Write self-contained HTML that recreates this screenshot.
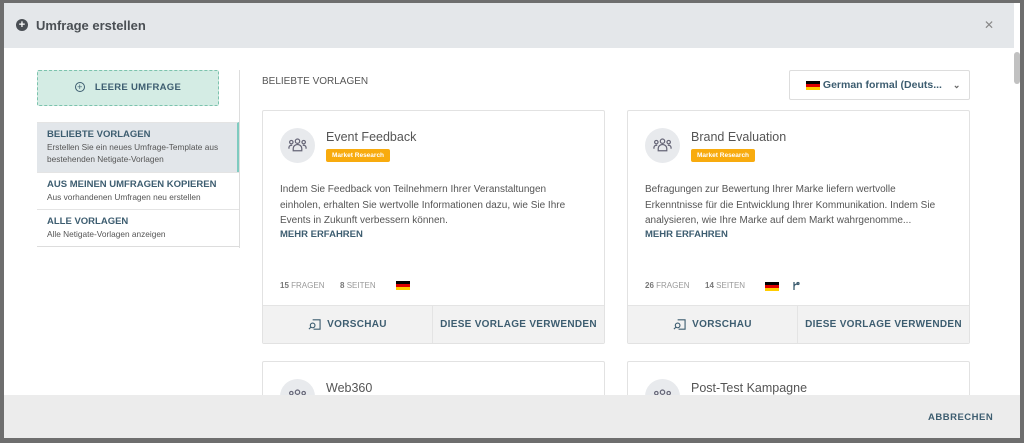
<!DOCTYPE html>
<html><head><meta charset="utf-8"><style>
*{box-sizing:border-box;margin:0;padding:0}
body{width:1024px;height:443px;overflow:hidden;background:#6e6e6e;font-family:"Liberation Sans",sans-serif;position:relative}
.modal{position:absolute;left:4px;top:3px;width:1016px;height:435px;background:#fff;overflow:hidden}
.hdr{position:absolute;left:0;top:0;width:1010px;height:45px;background:#e4e7ea}
.hdr .t{position:absolute;left:32px;top:15px;font-size:13px;font-weight:bold;color:#4a4f54}
.hdr .pl{position:absolute;left:12px;top:16px;width:12px;height:12px;border-radius:50%;background:#4a4f54;color:#fff;font-size:11px;line-height:12px;text-align:center;font-weight:bold}
.hdr .x{position:absolute;left:980px;top:15px;font-size:12px;color:#888}
.sb{position:absolute;left:1010px;top:45px;width:6px;height:390px;background:#fff}
.sb div{position:absolute;left:0;top:4px;width:6px;height:32px;background:#c1c1c1;border-radius:3px}
.btn{position:absolute;left:33px;top:67px;width:182px;height:36px;background:#d4ece4;border:1px dashed #7cc3ad;border-radius:2px;font-size:9.5px;font-weight:bold;color:#3d5d70;letter-spacing:.3px;text-align:center;line-height:34px}
.btn span{display:inline-block;width:10px;height:10px;border:1px solid #3d5d70;border-radius:50%;font-size:9px;line-height:8px;font-weight:normal;margin-right:10px}
.vline{position:absolute;left:235px;top:67px;width:1px;height:178px;background:#ddd}
.menu{position:absolute;left:33px;top:119px;width:202px;border-bottom:1px solid #ddd}
.mi{padding:6px 10px;border-top:1px solid #e4e4e4;font-size:8.3px;color:#555;line-height:12px}
.mi b{display:block;font-size:9.5px;color:#3d5d70;line-height:12px}
.mi.a{background:#e2e6ea;border-right:2px solid #7fcbc0;height:50px;padding-top:6px}
.sec{position:absolute;left:258px;top:73px;font-size:10px;color:#555}
.lang{position:absolute;left:785px;top:67px;width:181px;height:30px;border:1px solid #ddd;border-radius:2px;font-size:10.5px;font-weight:bold;color:#3d5d70;line-height:28px;padding-left:16px}
.flag{display:inline-block;width:14px;height:9px;background:linear-gradient(#000 0 33%,#d00 33% 66%,#fc0 66%);vertical-align:middle}
.card{position:absolute;width:343px;border:1px solid #e2e2e2;border-radius:2px;background:#fff}
.ic{position:absolute;left:17px;top:17px;width:35px;height:35px;border-radius:50%;background:#e8eaed}
.ic svg{position:absolute;left:8px;top:9px}
.ct{position:absolute;left:63px;top:19px;font-size:12.5px;color:#555}
.tag{position:absolute;left:63px;top:38px;background:#f8ab0e;color:#fff;font-size:6.5px;font-weight:bold;padding:3px 6px;border-radius:2px}
.desc{position:absolute;left:17px;top:71px;width:292px;font-size:10px;color:#555;line-height:15.5px}
.more{position:absolute;left:17px;top:118px;font-size:9.5px;font-weight:bold;color:#3d5d70}
.meta{position:absolute;left:17px;top:170px;font-size:8px;color:#999}
.meta b{color:#777}
.cf{position:absolute;left:0;top:194px;width:341px;height:38px;background:#f2f2f2;border-top:1px solid #e4e4e4;font-size:10px;font-weight:bold;color:#3d5d70;letter-spacing:.3px}
.cf div{position:absolute;top:0;height:37px;line-height:37px;text-align:center}
.cf svg{vertical-align:middle;margin-right:6px}
.ftr{position:absolute;left:0;top:392px;width:1016px;height:43px;background:#ececec}
.ftr span{position:absolute;left:924px;top:17px;font-size:9.5px;font-weight:bold;color:#3d5d70;letter-spacing:.5px}
</style></head><body>
<svg width="0" height="0" style="position:absolute"><defs>
<symbol id="ppl" viewBox="0 0 20 16"><g fill="none" stroke="#667" stroke-width="1.3"><circle cx="10" cy="4" r="2.3"/><circle cx="3.5" cy="5" r="1.8"/><circle cx="16.5" cy="5" r="1.8"/><path d="M5.5 14v-2.5a4.5 4 0 0 1 9 0V14zM1 12v-1.5a2.5 2.5 0 0 1 3.5-2M19 12v-1.5a2.5 2.5 0 0 0-3.5-2"/></g></symbol>
<symbol id="pv" viewBox="0 0 14 14"><g fill="none" stroke="#3d5d70" stroke-width="1.2"><path d="M5 2h8v10H6"/><circle cx="5" cy="8" r="2.5"/><path d="M3.2 9.8L1 12"/></g></symbol>
</defs></svg>
<div class="modal">
<div class="hdr"><div class="pl">+</div><div class="t">Umfrage erstellen</div><div class="x">✕</div></div>
<div class="sb"><div></div></div>
<div class="btn"><span>+</span>LEERE UMFRAGE</div>
<div class="vline"></div>
<div class="menu">
<div class="mi a"><b>BELIEBTE VORLAGEN</b>Erstellen Sie ein neues Umfrage-Template aus bestehenden Netigate-Vorlagen</div>
<div class="mi"><b>AUS MEINEN UMFRAGEN KOPIEREN</b>Aus vorhandenen Umfragen neu erstellen</div>
<div class="mi"><b>ALLE VORLAGEN</b>Alle Netigate-Vorlagen anzeigen</div>
</div>
<div class="sec">BELIEBTE VORLAGEN</div>
<div class="lang"><span class="flag"></span> German formal (Deuts... <span style="margin-left:8px;font-size:9px;color:#666">⌄</span></div>

<div class="card" style="left:258px;top:107px;height:234px">
<div class="ic"><svg width="19" height="16"><use href="#ppl"/></svg></div><div class="ct">Event Feedback</div><div class="tag">Market Research</div>
<div class="desc">Indem Sie Feedback von Teilnehmern Ihrer Veranstaltungen einholen, erhalten Sie wertvolle Informationen dazu, wie Sie Ihre Events in Zukunft verbessern können.</div>
<div class="more">MEHR ERFAHREN</div>
<div class="meta"><b>15</b> FRAGEN &nbsp;&nbsp;&nbsp;&nbsp;&nbsp; <b>8</b> SEITEN &nbsp;&nbsp;&nbsp;&nbsp;&nbsp;&nbsp;&nbsp; <span class="flag"></span></div>
<div class="cf"><div style="left:0;width:170px;border-right:1px solid #e4e4e4"><svg width="13" height="13"><use href="#pv"/></svg>VORSCHAU</div><div style="left:170px;width:171px">DIESE VORLAGE VERWENDEN</div></div>
</div>

<div class="card" style="left:623px;top:107px;height:234px">
<div class="ic"><svg width="19" height="16"><use href="#ppl"/></svg></div><div class="ct">Brand Evaluation</div><div class="tag">Market Research</div>
<div class="desc">Befragungen zur Bewertung Ihrer Marke liefern wertvolle Erkenntnisse für die Entwicklung Ihrer Kommunikation. Indem Sie analysieren, wie Ihre Marke auf dem Markt wahrgenomme...</div>
<div class="more">MEHR ERFAHREN</div>
<div class="meta"><b>26</b> FRAGEN &nbsp;&nbsp;&nbsp;&nbsp;&nbsp; <b>14</b> SEITEN &nbsp;&nbsp;&nbsp;&nbsp;&nbsp;&nbsp;&nbsp; <span class="flag"></span> &nbsp;&nbsp;&nbsp;&nbsp; <svg width="8" height="10" style="vertical-align:middle"><g fill="none" stroke="#3d5d70" stroke-width="1.3"><path d="M2 1v8M2 6q0-3 4-3"/><circle cx="6" cy="2.5" r="1"/></g></svg></div>
<div class="cf"><div style="left:0;width:170px;border-right:1px solid #e4e4e4"><svg width="13" height="13"><use href="#pv"/></svg>VORSCHAU</div><div style="left:170px;width:171px">DIESE VORLAGE VERWENDEN</div></div>
</div>

<div class="card" style="left:258px;top:358px;height:80px"><div class="ic"><svg width="19" height="16"><use href="#ppl"/></svg></div><div class="ct">Web360</div></div>
<div class="card" style="left:623px;top:358px;height:80px"><div class="ic"><svg width="19" height="16"><use href="#ppl"/></svg></div><div class="ct">Post-Test Kampagne</div></div>

<div class="ftr"><span>ABBRECHEN</span></div>
</div>
</body></html>
